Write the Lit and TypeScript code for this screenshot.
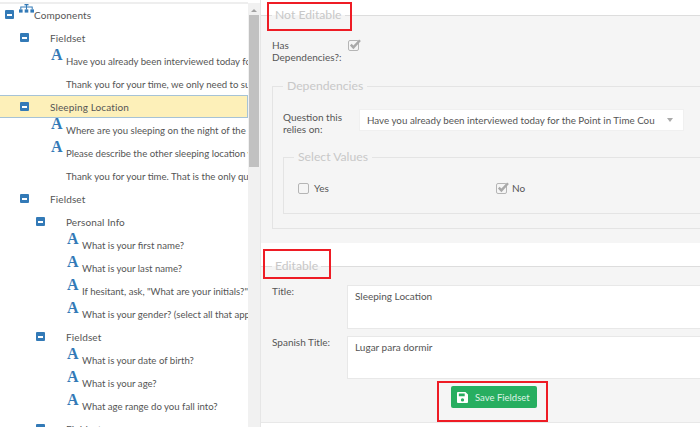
import { LitElement, html, css, nothing } from "lit";
import { customElement } from "lit/decorators.js";

type Node = { t: string; q?: boolean; noA?: boolean; sel?: boolean; kids?: Node[]; root?: boolean };

const tree: Node = {
  t: "Components", root: true, kids: [
    { t: "Fieldset", kids: [
      { t: "Have you already been interviewed today for the Point in Time Count?", q: true },
      { t: "Thank you for your time, we only need to survey each person once.", q: true, noA: true },
    ]},
    { t: "Sleeping Location", sel: true, kids: [
      { t: "Where are you sleeping on the night of the count?", q: true },
      { t: "Please describe the other sleeping location you use", q: true },
      { t: "Thank you for your time. That is the only question.", q: true, noA: true },
    ]},
    { t: "Fieldset", kids: [
      { t: "Personal Info", kids: [
        { t: "What is your first name?", q: true },
        { t: "What is your last name?", q: true },
        { t: "If hesitant, ask, \"What are your initials?\"", q: true },
        { t: "What is your gender? (select all that apply)", q: true },
      ]},
      { t: "Fieldset", kids: [
        { t: "What is your date of birth?", q: true },
        { t: "What is your age?", q: true },
        { t: "What age range do you fall into?", q: true },
      ]},
      { t: "Fieldset", kids: [] },
    ]},
  ],
};

const check = html`<svg class="cb" viewBox="0 0 13 12" width="13" height="12"><rect x="0.5" y="1.5" width="10" height="10" rx="1.5" fill="none" stroke="#b5b5b5"/><path d="M2.8 5.6l2.6 2.8L12 1.2" fill="none" stroke="#a9a9a9" stroke-width="2.4"/></svg>`;
const empty = html`<svg class="cb" viewBox="0 0 13 12" width="13" height="12"><rect x="0.5" y="1.5" width="10" height="10" rx="1.5" fill="none" stroke="#b5b5b5"/></svg>`;

@customElement("app-root")
export class AppRoot extends LitElement {
  static styles = css`
    :host { display: block; position: relative; width: 700px; height: 427px; overflow: hidden; background: #fff;
      font-family: "Lato", "Liberation Sans", sans-serif; font-size: 10px; color: #555; }
    .page { display: flex; height: 427px; }
    .left { width: 261px; flex: none; display: flex; padding-top: 3px; box-sizing: border-box; border-right: 1px solid #e6e6e6; overflow: hidden; position: relative; }
    .left::before { content: ""; position: absolute; left: 0; right: 12px; top: 2px; height: 2px; background: #eee; }
    .tree { width: 248px; flex: none; overflow: hidden; }
    .bar { width: 12px; flex: none; background: #f1f1f1; display: flex; flex-direction: column; align-items: center; }
    .up { width: 0; height: 0; margin: 6px 0 3px; border: 3px solid transparent; border-top: 0; border-bottom: 3px solid #a3a3a3; }
    .thumb { width: 10px; height: 152px; background: #c1c1c1; }
    .row { height: 23px; display: flex; align-items: center; white-space: nowrap; box-sizing: border-box; }
    .row.sel { background: #fdf0b9; border: 1px solid #a6c3d6; border-left: 0; }
    .tog { width: 9px; height: 9px; background: #337ab7; border-radius: 1px; flex: none; display: flex; align-items: center; justify-content: center; margin-right: 21px; }
    .tog::after { content: ""; width: 5px; height: 2px; background: #fff; }
    .root .tog { margin-right: 5px; }
    .org { flex: none; width: 15px; margin-top: -15px; }
    .a { width: 15px; flex: none; font: bold 16px/15px "Liberation Serif", serif; color: #337ab7; margin-top: -13px; box-sizing: border-box; }
    .label { letter-spacing: .12px; }
    .label.qt { margin-top: 1px; letter-spacing: 0; font-size: 9.6px; }
    .right { flex: 1; min-width: 0; overflow: hidden; padding-top: 6px; }
    fieldset { margin: 0; padding: 0; min-width: 0; border: 0; border-top: 1px solid #ddd; background: #f5f5f5; }
    legend { padding: 0 3px; margin-left: 0; font-size: 12.2px; line-height: 18px; color: #c8c8c8; }
    .ne { width: 460px; height: 237px; box-sizing: border-box; padding: 15px 0 0 11px; margin-bottom: 14px; }
    .ed { width: 460px; height: 166px; box-sizing: border-box; padding: 10px 0 0 11px; border-bottom: 1px solid #e8e8e8; }
    .inner { border: 1px solid #e4e4e4; padding: 0; width: 440px; }
    .f { display: flex; }
    .lab { line-height: 12px; width: 76px; flex: none; }
    .dep { height: 152px; box-sizing: border-box; margin-top: 14px; padding: 14px 0 0 10px; }
    .dep legend { margin-left: 0; padding: 0 4px; }
    .sv { margin-top: 13px; width: 430px; height: 66px; box-sizing: border-box; padding: 16px 0 0 14px; }
    .sv legend { padding: 0 4px; margin-left: -4px; }
    .dep .lab { width: 76px; margin-top: 2px; }
    .select { width: 325px; height: 22px; background: #fff; border: 1px solid #f0f0f0; box-sizing: border-box; display: flex; align-items: center; padding: 0 10px 0 7px; justify-content: space-between; white-space: nowrap; overflow: hidden; font-size: 9.8px; }
    .caret { width: 0; height: 0; border: 3.5px solid transparent; border-bottom: 0; border-top: 4px solid #aaa; }
    .opts { display: flex; }
    .opt { width: 198px; display: flex; align-items: center; gap: 3px; }
    .cb { display: block; }
    .input { width: 400px; height: 44px; background: #fff; border: 1px solid #e8e8e8; box-sizing: border-box; padding: 4px 7px; font-size: 10px; }
    .ed .lab { width: 75px; }
    .ed .f { margin-bottom: 7px; }
    .ed .f + .f .input { height: 43px; }
    .btn { display: flex; align-items: center; gap: 7px; width: 86px; height: 22px; box-sizing: border-box; padding-left: 6px; border-radius: 2px; background: #27ae60; color: #dff3e7; margin: 3px 0 0 179px; font-size: 9.5px; }
    .mark { position: absolute; border: 2px solid #ee1c25; box-sizing: border-box; pointer-events: none; }
    .m1 { left: 267px; top: 2px; width: 85px; height: 29px; }
    .m2 { left: 263px; top: 249px; width: 68px; height: 30px; }
    .m3 { left: 437px; top: 381px; width: 111px; height: 41px; }
  `;

  private renderNode(n: Node, depth: number): unknown {
    const indent = depth === 0 ? 5 : 20 + (depth - 1) * 16;
    const row = n.q
      ? html`<div class="row" style="padding-left:${indent + 15}px">
          ${n.noA ? html`<span class="a"></span>` : html`<span class="a">A</span>`}<span class="label qt">${n.t}</span></div>`
      : html`<div class="row ${n.sel ? "sel" : ""} ${n.root ? "root" : ""}" style="padding-left:${indent}px">
          <span class="tog"></span>
          ${n.root ? html`<svg class="org" viewBox="0 0 15 11" width="15" height="11" fill="#337ab7"><rect x="5.5" y="0" width="4" height="3.4"/><rect x="0" y="7.4" width="3.6" height="3.2"/><rect x="5.7" y="7.4" width="3.6" height="3.2"/><rect x="11.4" y="7.4" width="3.6" height="3.2"/><path d="M7 3h1v1.6h5.7V7.4h-1V5.6H8V7.4H7V5.6H2.3v1.8h-1V4.6H7z"/></svg>` : nothing}
          <span class="label">${n.t}</span></div>`;
    return html`${row}${(n.kids ?? []).map((k) => this.renderNode(k, depth + 1))}`;
  }

  render() {
    return html`
      <div class="page">
        <div class="left">
          <div class="tree">${this.renderNode(tree, 0)}</div>
          <div class="bar"><span class="up"></span><span class="thumb"></span></div>
        </div>
        <div class="right">
          <fieldset class="ne">
            <legend>Not Editable</legend>
            <div class="f"><div class="lab">Has Dependencies?:</div>${check}</div>
            <fieldset class="inner dep">
              <legend>Dependencies</legend>
              <div class="f"><div class="lab">Question this relies on:</div>
                <div class="select"><span>Have you already been interviewed today for the Point in Time Cou</span><span class="caret"></span></div></div>
              <fieldset class="inner sv">
                <legend>Select Values</legend>
                <div class="opts">
                  <div class="opt">${empty}<span>Yes</span></div>
                  <div class="opt">${check}<span>No</span></div>
                </div>
              </fieldset>
            </fieldset>
          </fieldset>
          <fieldset class="ed">
            <legend>Editable</legend>
            <div class="f"><div class="lab">Title:</div><div class="input">Sleeping Location</div></div>
            <div class="f"><div class="lab">Spanish Title:</div><div class="input">Lugar para dormir</div></div>
            <div class="btn">
              <svg viewBox="0 0 12 12" width="11" height="11"><path fill="#fff" d="M1 0h8.2L12 2.8V11a1 1 0 0 1-1 1H1a1 1 0 0 1-1-1V1a1 1 0 0 1 1-1zm1 1.6v3h6.4v-3zM6 6.8a1.8 1.8 0 1 0 0 3.6 1.8 1.8 0 0 0 0-3.6z"/></svg>
              <span>Save Fieldset</span>
            </div>
          </fieldset>
        </div>
      </div>
      <div class="mark m1"></div><div class="mark m2"></div><div class="mark m3"></div>
    `;
  }
}
